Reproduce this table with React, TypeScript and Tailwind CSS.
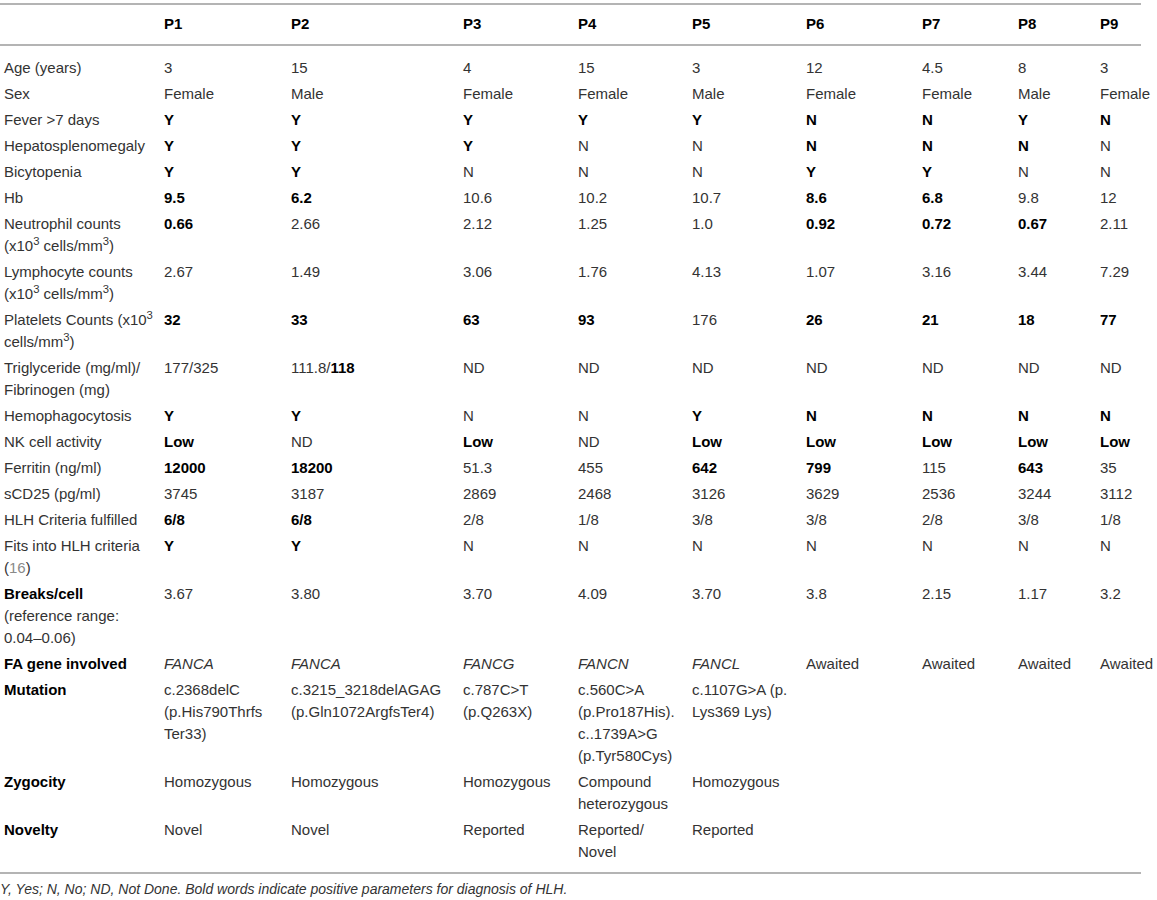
import React from "react";

type Cell = React.ReactNode;

const B = ({ children }: { children: React.ReactNode }) => (
  <span className="font-bold text-black">{children}</span>
);
const I = ({ children }: { children: React.ReactNode }) => <span className="italic">{children}</span>;
const Sup = () => <sup>3</sup>;

const lines = (...xs: React.ReactNode[]) => (
  <>
    {xs.map((x, i) => (
      <div key={i}>{x}</div>
    ))}
  </>
);

const bo = (s: string) => <B>{s}</B>;

type Row = { label: Cell; cells: Cell[] };

const rows: Row[] = [
  { label: "Age (years)", cells: ["3", "15", "4", "15", "3", "12", "4.5", "8", "3"] },
  { label: "Sex", cells: ["Female", "Male", "Female", "Female", "Male", "Female", "Female", "Male", "Female"] },
  { label: "Fever >7 days", cells: ["Y", "Y", "Y", "Y", "Y", "N", "N", "Y", "N"].map(bo) },
  {
    label: "Hepatosplenomegaly",
    cells: [bo("Y"), bo("Y"), bo("Y"), "N", "N", bo("N"), bo("N"), bo("N"), "N"],
  },
  { label: "Bicytopenia", cells: [bo("Y"), bo("Y"), "N", "N", "N", bo("Y"), bo("Y"), "N", "N"] },
  {
    label: "Hb",
    cells: [bo("9.5"), bo("6.2"), "10.6", "10.2", "10.7", bo("8.6"), bo("6.8"), "9.8", "12"],
  },
  {
    label: lines(
      "Neutrophil counts",
      <>
        (x10
        <Sup /> cells/mm
        <Sup />)
      </>
    ),
    cells: [bo("0.66"), "2.66", "2.12", "1.25", "1.0", bo("0.92"), bo("0.72"), bo("0.67"), "2.11"],
  },
  {
    label: lines(
      "Lymphocyte counts",
      <>
        (x10
        <Sup /> cells/mm
        <Sup />)
      </>
    ),
    cells: ["2.67", "1.49", "3.06", "1.76", "4.13", "1.07", "3.16", "3.44", "7.29"],
  },
  {
    label: lines(
      <>
        Platelets Counts (x10
        <Sup />
      </>,
      <>
        cells/mm
        <Sup />)
      </>
    ),
    cells: [bo("32"), bo("33"), bo("63"), bo("93"), "176", bo("26"), bo("21"), bo("18"), bo("77")],
  },
  {
    label: lines("Triglyceride (mg/ml)/", "Fibrinogen (mg)"),
    cells: [
      "177/325",
      <>
        111.8/<B>118</B>
      </>,
      "ND",
      "ND",
      "ND",
      "ND",
      "ND",
      "ND",
      "ND",
    ],
  },
  {
    label: "Hemophagocytosis",
    cells: [bo("Y"), bo("Y"), "N", "N", bo("Y"), bo("N"), bo("N"), bo("N"), bo("N")],
  },
  {
    label: "NK cell activity",
    cells: [bo("Low"), "ND", bo("Low"), "ND", bo("Low"), bo("Low"), bo("Low"), bo("Low"), bo("Low")],
  },
  {
    label: "Ferritin (ng/ml)",
    cells: [bo("12000"), bo("18200"), "51.3", "455", bo("642"), bo("799"), "115", bo("643"), "35"],
  },
  {
    label: "sCD25 (pg/ml)",
    cells: ["3745", "3187", "2869", "2468", "3126", "3629", "2536", "3244", "3112"],
  },
  {
    label: "HLH Criteria fulfilled",
    cells: [bo("6/8"), bo("6/8"), "2/8", "1/8", "3/8", "3/8", "2/8", "3/8", "1/8"],
  },
  {
    label: lines(
      "Fits into HLH criteria",
      <>
        (<span className="text-[#8a8a8a]">16</span>)
      </>
    ),
    cells: [bo("Y"), bo("Y"), "N", "N", "N", "N", "N", "N", "N"],
  },
  {
    label: lines(<B>Breaks/cell</B>, "(reference range:", "0.04–0.06)"),
    cells: ["3.67", "3.80", "3.70", "4.09", "3.70", "3.8", "2.15", "1.17", "3.2"],
  },
  {
    label: <B>FA gene involved</B>,
    cells: [
      <I>FANCA</I>,
      <I>FANCA</I>,
      <I>FANCG</I>,
      <I>FANCN</I>,
      <I>FANCL</I>,
      "Awaited",
      "Awaited",
      "Awaited",
      "Awaited",
    ],
  },
  {
    label: <B>Mutation</B>,
    cells: [
      lines("c.2368delC", "(p.His790Thrfs", "Ter33)"),
      lines("c.3215_3218delAGAG", "(p.Gln1072ArgfsTer4)"),
      lines("c.787C>T", "(p.Q263X)"),
      lines("c.560C>A", "(p.Pro187His).", "c..1739A>G", "(p.Tyr580Cys)"),
      lines("c.1107G>A (p.", "Lys369 Lys)"),
      "",
      "",
      "",
      "",
    ],
  },
  {
    label: <B>Zygocity</B>,
    cells: [
      "Homozygous",
      "Homozygous",
      "Homozygous",
      lines("Compound", "heterozygous"),
      "Homozygous",
      "",
      "",
      "",
      "",
    ],
  },
  {
    label: <B>Novelty</B>,
    cells: ["Novel", "Novel", "Reported", lines("Reported/", "Novel"), "Reported", "", "", "", ""],
  },
];

const GRID =
  "grid grid-cols-[160px_127px_172px_115px_114px_114px_116px_96px_82px_45px]";

export default function App() {
  return (
    <div
      className="w-[1157px] h-[900px] bg-white pt-[3px] text-[15px] text-[#333]"
      style={{ fontFamily: '"Liberation Sans", Arial, sans-serif' }}
    >
      <div className="w-[1141px] border-t-2 border-b-2 border-[#b4b4b4]">
        <div className={`${GRID} h-[41px] items-center border-b-2 border-[#b4b4b4] font-bold text-black`}>
          <div className="pl-[4px]"></div>
          {["P1", "P2", "P3", "P4", "P5", "P6", "P7", "P8", "P9"].map((p) => (
            <div key={p} className="pl-[4px] whitespace-nowrap">
              {p}
            </div>
          ))}
        </div>
        <div className="pt-[9px] pb-[7px]">
          {rows.map((r, i) => (
            <div key={i} className={`${GRID} leading-[22px]`}>
              <div className="pl-[4px] py-[2px] whitespace-nowrap">{r.label}</div>
              {r.cells.map((c, j) => (
                <div key={j} className="pl-[4px] py-[2px] whitespace-nowrap">
                  {c}
                </div>
              ))}
            </div>
          ))}
        </div>
      </div>
      <div className="mt-[5px] text-[14px] italic text-[#333] leading-[20px]">
        Y, Yes; N, No; ND, Not Done. Bold words indicate positive parameters for diagnosis of HLH.
      </div>
    </div>
  );
}
